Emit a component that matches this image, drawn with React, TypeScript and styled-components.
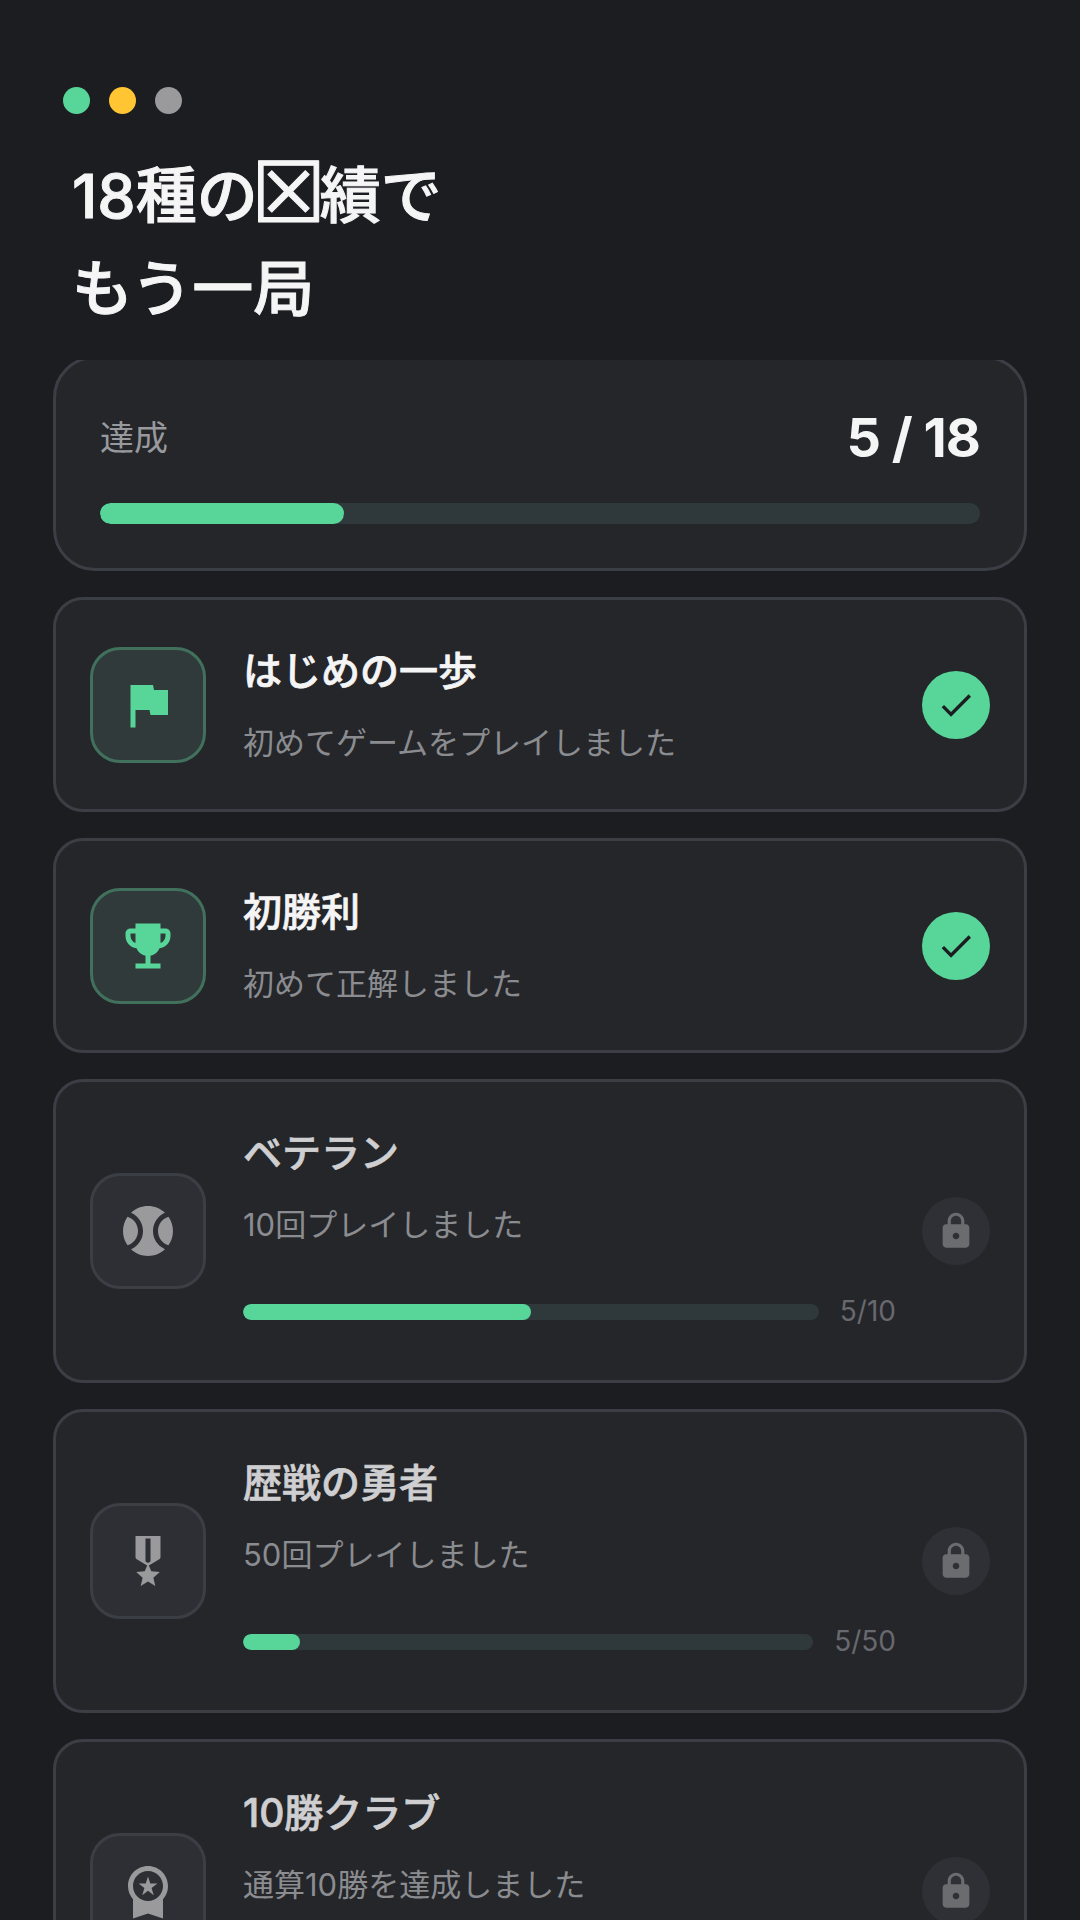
import React from 'react';
import styled, { createGlobalStyle } from 'styled-components';
import {
  MdCheck,
  MdEmojiEvents,
  MdFlag,
  MdLock,
  MdMilitaryTech,
  MdSportsBaseball,
  MdWorkspacePremium,
} from 'react-icons/md';

const GlobalStyle = createGlobalStyle`
  html, body {
    margin: 0;
    padding: 0;
    background: #1b1d21;
  }
  body {
    font-family: Inter, "Noto Sans CJK JP", sans-serif;
  }
`;

const Screen = styled.div`
  width: 1080px;
  height: 1920px;
  display: flex;
  flex-direction: column;
  overflow: hidden;
  background: #1b1d21;
`;

const Header = styled.header`
  flex: none;
  height: 360px;
  box-sizing: border-box;
  padding: 87px 0 0 63px;
`;

const Dots = styled.div`
  display: flex;
  gap: 19px;
`;

const Dot = styled.span<{ $color: string }>`
  width: 27px;
  height: 27px;
  border-radius: 50%;
  background: ${(p) => p.$color};
`;

const Title = styled.h1`
  margin: 36px 0 0 9px;
  font-size: 61px;
  line-height: 93px;
  font-weight: 500;
  -webkit-text-stroke: 1px #f5f5f6;
  color: #f5f5f6;
`;

const MissingGlyph = styled.span`
  display: inline-flex;
  justify-content: center;
  width: 62px;
  height: 60px;
  vertical-align: -4px;
  font-family: "DejaVu Sans", sans-serif;
  font-size: 84px;
  font-weight: 400;
  line-height: 60px;
`;

const List = styled.main`
  flex: 1;
  min-height: 0;
  overflow: hidden;
  display: flex;
  flex-direction: column;
  gap: 26px;
  padding: 0 53px;
`;

const SummaryCard = styled.section`
  flex: none;
  margin-top: -4px;
  padding: 46px 44px 44px;
  background: #24262a;
  border: 3px solid #3c3e45;
  border-radius: 42px;
`;

const SummaryRow = styled.div`
  display: flex;
  align-items: center;
  justify-content: space-between;
`;

const SummaryLabel = styled.span`
  padding-bottom: 5px;
  font-size: 34px;
  color: #98999d;
`;

const SummaryCount = styled.span`
  font-size: 54px;
  line-height: 66px;
  font-weight: 700;
  letter-spacing: -1px;
  color: #f5f5f6;
`;

const Track = styled.div<{ $height: number }>`
  flex: 1;
  height: ${(p) => p.$height}px;
  border-radius: ${(p) => p.$height / 2}px;
  background: #2f393b;
  overflow: hidden;
`;

const Fill = styled.div<{ $pct: number }>`
  width: ${(p) => p.$pct}%;
  height: 100%;
  border-radius: inherit;
  background: #58d69a;
`;

const SummaryBar = styled.div`
  display: flex;
  margin-top: 32px;
`;

const Card = styled.article`
  flex: none;
  display: flex;
  align-items: center;
  padding: 44px 34px;
  background: #24262a;
  border: 3px solid #3c3e45;
  border-radius: 30px;
`;

const IconBox = styled.div<{ $done: boolean }>`
  flex: none;
  width: 116px;
  height: 116px;
  box-sizing: border-box;
  margin-right: 37px;
  display: flex;
  align-items: center;
  justify-content: center;
  border-radius: 30px;
  border: 3px solid ${(p) => (p.$done ? '#41705c' : '#3c3e45')};
  background: ${(p) => (p.$done ? '#303a3a' : '#2d2f34')};
  color: ${(p) => (p.$done ? '#58d69a' : '#9a9a9c')};
  font-size: 60px;
`;

const Body = styled.div`
  flex: 1;
  min-width: 0;
  margin-right: 26px;
`;

const CardTitle = styled.h2<{ $done: boolean }>`
  margin: -1px 0 0;
  font-size: 39px;
  line-height: 56px;
  font-weight: 500;
  -webkit-text-stroke: 0.7px ${(p) => (p.$done ? '#f5f5f6' : '#cfcfd1')};
  color: ${(p) => (p.$done ? '#f5f5f6' : '#cfcfd1')};
`;

const CardText = styled.p`
  margin: 22px 0 1px;
  font-size: 31px;
  line-height: 43px;
  color: #8b8c90;
`;

const ProgressRow = styled.div`
  display: flex;
  align-items: center;
  gap: 21px;
  margin-top: 41px;
`;

const ProgressLabel = styled.span`
  font-size: 28px;
  line-height: 49px;
  color: #68696e;
`;

const StatusBadge = styled.div<{ $done: boolean }>`
  flex: none;
  width: 68px;
  height: 68px;
  display: flex;
  align-items: center;
  justify-content: center;
  border-radius: 50%;
  background: ${(p) => (p.$done ? '#58d69a' : '#2f3035')};
  color: ${(p) => (p.$done ? '#1b1d21' : '#6b6c70')};
  font-size: 40px;
`;

interface Achievement {
  title: string;
  text: string;
  icon: React.ReactNode;
  done?: boolean;
  current?: number;
  total?: number;
}

const achievements: Achievement[] = [
  { title: 'はじめの一歩', text: '初めてゲームをプレイしました', icon: <MdFlag />, done: true },
  { title: '初勝利', text: '初めて正解しました', icon: <MdEmojiEvents />, done: true },
  { title: 'ベテラン', text: '10回プレイしました', icon: <MdSportsBaseball />, current: 5, total: 10 },
  { title: '歴戦の勇者', text: '50回プレイしました', icon: <MdMilitaryTech />, current: 5, total: 50 },
  { title: '10勝クラブ', text: '通算10勝を達成しました', icon: <MdWorkspacePremium />, current: 1, total: 10 },
];

export default function App() {
  return (
    <Screen>
      <GlobalStyle />
      <Header>
        <Dots>
          <Dot $color="#58d69a" />
          <Dot $color="#ffc533" />
          <Dot $color="#9a9a9c" />
        </Dots>
        <Title>
          18種の<MissingGlyph>☒</MissingGlyph>績で
          <br />
          もう一局
        </Title>
      </Header>
      <List>
        <SummaryCard>
          <SummaryRow>
            <SummaryLabel>達成</SummaryLabel>
            <SummaryCount>5 / 18</SummaryCount>
          </SummaryRow>
          <SummaryBar>
            <Track $height={21}>
              <Fill $pct={(5 / 18) * 100} />
            </Track>
          </SummaryBar>
        </SummaryCard>
        {achievements.map((a) => (
          <Card key={a.title}>
            <IconBox $done={!!a.done}>{a.icon}</IconBox>
            <Body>
              <CardTitle $done={!!a.done}>{a.title}</CardTitle>
              <CardText>{a.text}</CardText>
              {a.total && (
                <ProgressRow>
                  <Track $height={16}>
                    <Fill $pct={((a.current ?? 0) / a.total) * 100} />
                  </Track>
                  <ProgressLabel>
                    {a.current}/{a.total}
                  </ProgressLabel>
                </ProgressRow>
              )}
            </Body>
            <StatusBadge $done={!!a.done}>{a.done ? <MdCheck /> : <MdLock />}</StatusBadge>
          </Card>
        ))}
      </List>
    </Screen>
  );
}
